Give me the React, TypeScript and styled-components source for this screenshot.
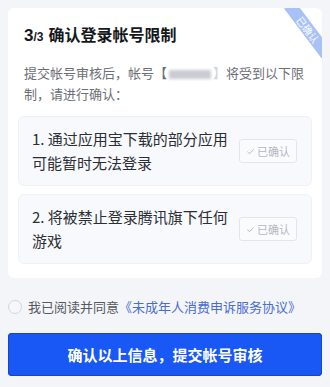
import React from "react";
import styled, { createGlobalStyle } from "styled-components";

const Global = createGlobalStyle`
  html, body { margin: 0; padding: 0; background: #f3f5f9; }
  body { font-family: "Noto Sans CJK SC", "Noto Sans", sans-serif; -webkit-font-smoothing: antialiased; }
  * { box-sizing: border-box; }
`;

const Page = styled.div`
  padding: 8px 8px 0;
  width: 330px;
`;

const Card = styled.div`
  position: relative;
  overflow: hidden;
  background: #ffffff;
  border-radius: 6px;
  padding: 14px 10px 14px;
`;

const Ribbon = styled.div`
  position: absolute;
  top: 15px;
  right: -17px;
  width: 62px;
  height: 13px;
  background: #a9c2f6;
  color: #ffffff;
  font-size: 10px;
  line-height: 13px;
  text-align: center;
  transform: rotate(53deg);
`;

const Title = styled.div`
  padding: 0 6px;
  font-size: 16px;
  font-weight: 700;
  line-height: 24px;
  color: #15181c;
  display: flex;
  align-items: baseline;
`;

const Step = styled.span`
  font-size: 17px;
  font-family: "Liberation Sans", "Noto Sans", sans-serif;
`;

const StepTotal = styled.span`
  font-size: 12px;
  font-family: "Liberation Sans", "Noto Sans", sans-serif;
  margin-right: 5px;
`;

const Para = styled.p`
  margin: 13px 0 0;
  padding: 0 6px;
  font-size: 13px;
  line-height: 21px;
  color: #6b6f76;
`;

const Blur = styled.span`
  display: inline-block;
  width: 42px;
  height: 9px;
  margin: 0 2px;
  background: #c9ccd2;
  filter: blur(1.5px);
  vertical-align: middle;
`;

const Faint = styled.span`
  color: #d3d6db;
`;

const List = styled.div`
  margin-top: 12px;
  display: flex;
  flex-direction: column;
  gap: 8px;
`;

const Item = styled.div`
  display: flex;
  align-items: center;
  gap: 4px;
  padding: 10px 14px 10px 13px;
  background: #f7f9fc;
  border: 1px solid #eff1f5;
  border-radius: 6px;
`;

const ItemText = styled.div`
  flex: 1;
  font-size: 15px;
  line-height: 24px;
  color: #2b2e33;
`;

const Badge = styled.div`
  flex: none;
  width: 58px;
  height: 24px;
  display: flex;
  align-items: center;
  justify-content: center;
  gap: 2px;
  border: 1px solid #e2e5ea;
  border-radius: 3px;
  background: #fafbfd;
  color: #b3b7be;
  font-size: 11px;
`;

const Agree = styled.div`
  margin-top: 19px;
  display: flex;
  align-items: center;
  gap: 6px;
  font-size: 13px;
  line-height: 20px;
  color: #55595f;
`;

const Circle = styled.span`
  width: 14px;
  height: 14px;
  border-radius: 50%;
  border: 1px solid #d3d6dc;
  background: #f6f7f9;
  flex: none;
`;

const Link = styled.span`
  color: #4a6ccf;
`;

const Button = styled.button`
  margin-top: 16px;
  width: 100%;
  height: 43px;
  border: none;
  border-radius: 4px;
  background: #1958f5;
  color: #ffffff;
  font-family: "Noto Sans CJK SC", sans-serif;
  font-size: 15px;
  font-weight: 700;
  box-shadow: 0 0 0 1px #1446c8 inset;
`;

const Check = () => (
  <svg width="9" height="9" viewBox="0 0 10 10" fill="none">
    <path d="M1.5 5.2 L4 7.5 L8.5 2.5" stroke="#b3b7be" strokeWidth="1" />
  </svg>
);

const items = ["1. 通过应用宝下载的部分应用可能暂时无法登录", "2. 将被禁止登录腾讯旗下任何游戏"];

export default function App() {
  return (
    <Page>
      <Global />
      <Card>
        <Ribbon>已确认</Ribbon>
        <Title>
          <Step>3</Step>
          <StepTotal>/3</StepTotal>
          确认登录帐号限制
        </Title>
        <Para>
          提交帐号审核后，帐号【<Blur />
          <Faint>】</Faint>将受到以下限制，请进行确认：
        </Para>
        <List>
          {items.map((t) => (
            <Item key={t}>
              <ItemText>{t}</ItemText>
              <Badge>
                <Check />
                已确认
              </Badge>
            </Item>
          ))}
        </List>
      </Card>
      <Agree>
        <Circle />
        <span>
          我已阅读并同意<Link>《未成年人消费申诉服务协议》</Link>
        </span>
      </Agree>
      <Button>确认以上信息，提交帐号审核</Button>
    </Page>
  );
}
